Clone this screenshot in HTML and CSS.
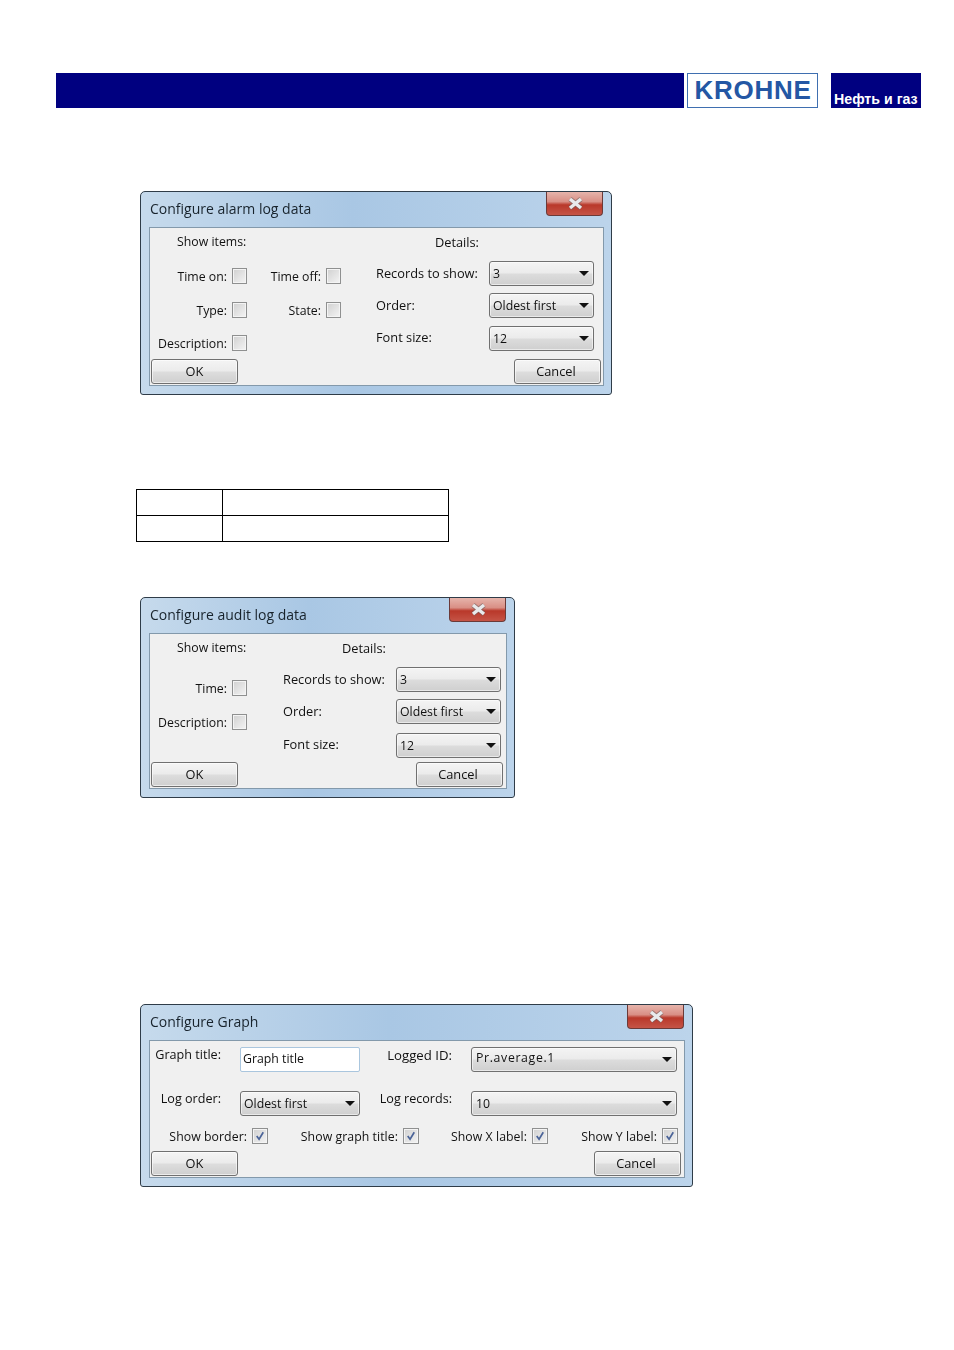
FILE: index.html
```html
<!DOCTYPE html>
<html lang="en">
<head>
<meta charset="utf-8">
<title>Configure dialogs</title>
<link rel="stylesheet" href="styles.css">
</head>
<body>
<header class="page-head">
  <div class="head-bar"></div>
  <div class="head-logo">KROHNE</div>
  <div class="head-tag">Нефть и газ</div>
</header>

<section class="dlg dlg-alarm">
  <div class="titlebar"><span class="title">Configure alarm log data</span><span class="close"><svg viewBox="0 0 57 24"><path class="x-edge" d="M24 7 L35 16 M35 7 L24 16"/><path class="x-mark" d="M24 7 L35 16 M35 7 L24 16"/></svg></span></div>
  <div class="panel">
    <div class="body">
      <div class="items">
        <div class="head head-items">Show items:</div>
        <div class="field"><span>Time on:</span><i class="chk"></i></div>
        <div class="field"><span>Time off:</span><i class="chk"></i></div>
        <div class="field"><span>Type:</span><i class="chk"></i></div>
        <div class="field"><span>State:</span><i class="chk"></i></div>
        <div class="field"><span>Description:</span><i class="chk"></i></div>
      </div>
      <div class="details">
        <div class="head head-details">Details:</div>
        <div class="lbl">Records to show:</div><div class="sel">3</div>
        <div class="lbl">Order:</div><div class="sel">Oldest first</div>
        <div class="lbl">Font size:</div><div class="sel">12</div>
      </div>
    </div>
    <div class="foot"><div class="btn">OK</div><div class="btn">Cancel</div></div>
  </div>
</section>

<table class="blank">
  <colgroup><col class="c1"><col class="c2"></colgroup>
  <tr><td></td><td></td></tr>
  <tr><td></td><td></td></tr>
</table>

<section class="dlg dlg-audit">
  <div class="titlebar"><span class="title">Configure audit log data</span><span class="close"><svg viewBox="0 0 57 24"><path class="x-edge" d="M24 7 L35 16 M35 7 L24 16"/><path class="x-mark" d="M24 7 L35 16 M35 7 L24 16"/></svg></span></div>
  <div class="panel">
    <div class="body">
      <div class="items">
        <div class="head head-items">Show items:</div>
        <div class="field"><span>Time:</span><i class="chk"></i></div>
        <div class="field"><span>Description:</span><i class="chk"></i></div>
      </div>
      <div class="details">
        <div class="head head-details">Details:</div>
        <div class="lbl">Records to show:</div><div class="sel">3</div>
        <div class="lbl">Order:</div><div class="sel">Oldest first</div>
        <div class="lbl">Font size:</div><div class="sel">12</div>
      </div>
    </div>
    <div class="foot"><div class="btn">OK</div><div class="btn">Cancel</div></div>
  </div>
</section>

<section class="dlg dlg-graph">
  <div class="titlebar"><span class="title">Configure Graph</span><span class="close"><svg viewBox="0 0 57 24"><path class="x-edge" d="M24 7 L35 16 M35 7 L24 16"/><path class="x-mark" d="M24 7 L35 16 M35 7 L24 16"/></svg></span></div>
  <div class="panel">
    <div class="body body-graph">
      <div class="form">
        <div class="flbl">Graph title:</div>
        <div class="input">Graph title</div>
        <div class="flbl">Logged ID:</div>
        <div class="sel sel-wide">Pr.average.1</div>
        <div class="flbl">Log order:</div>
        <div class="sel">Oldest first</div>
        <div class="flbl">Log records:</div>
        <div class="sel sel-num">10</div>
      </div>
      <div class="checks">
        <div class="field"><span>Show border:</span><i class="chk"><svg viewBox="0 0 15 15"><path d="M4 7.5 L6.5 11 L11 3.5"/></svg></i></div>
        <div class="field"><span>Show graph title:</span><i class="chk"><svg viewBox="0 0 15 15"><path d="M4 7.5 L6.5 11 L11 3.5"/></svg></i></div>
        <div class="field"><span>Show X label:</span><i class="chk"><svg viewBox="0 0 15 15"><path d="M4 7.5 L6.5 11 L11 3.5"/></svg></i></div>
        <div class="field"><span>Show Y label:</span><i class="chk"><svg viewBox="0 0 15 15"><path d="M4 7.5 L6.5 11 L11 3.5"/></svg></i></div>
      </div>
    </div>
    <div class="foot"><div class="btn">OK</div><div class="btn">Cancel</div></div>
  </div>
</section>
</body>
</html>
```
FILE: styles.css
```css
* { box-sizing: border-box; }
html, body { margin: 0; background: #fff; }
body { height: 1350px; overflow: hidden; font-family: "Open Sans", "Liberation Sans", sans-serif; }

.page-head { display: flex; margin: 73px 33px 0 56px; height: 35px; }
.head-bar { width: 628px; background: #000080; }
.head-logo {
  width: 131px; margin-left: 3px; border: 1px solid #3f6fb0; background: #fff;
  color: #2457a4; font: bold 26px/33px "Liberation Sans", sans-serif;
  text-align: center; letter-spacing: .7px; padding-left: 1px;
}
.head-tag {
  width: 90px; margin-left: 13px; background: #000080; color: #fff;
  font: bold 14.2px/17px "Liberation Sans", sans-serif;
  padding: 18px 0 0 3px; white-space: nowrap; overflow: hidden;
}

.dlg {
  position: relative; border: 1px solid #2f3c48; border-radius: 5px 5px 3px 3px;
  padding: 0 7px 8px 8px; color: #111; font-size: 12.3px; line-height: 16px;
  background: linear-gradient(90deg, #c6daec 0%, #a9c7e4 45%, #bcd4eb 100%);
  filter: blur(.4px);
}
.dlg-alarm { width: 472px; margin: 83px 0 0 140px; }
.dlg-audit { width: 375px; margin: 55px 0 0 140px; }
.dlg-graph { width: 553px; margin: 206px 0 0 140px; }

.titlebar { display: flex; justify-content: space-between; height: 35px; margin-right: 1px; }
.title { font-size: 14px; line-height: 34px; padding-left: 1px; color: #18232c; }
.close {
  width: 57px; height: 24px; border: 1px solid #6b3a38; border-top: 0; border-radius: 0 0 4px 4px;
  background: linear-gradient(#e6b4ab 0%, #d98f85 42%, #b9382a 56%, #c55446 100%);
}
.close svg { display: block; width: 57px; height: 24px; margin-left: -1px; }
.x-edge { fill: none; stroke: #6e5d5e; stroke-width: 5; opacity: .6; }
.x-mark { fill: none; stroke: #e8eaec; stroke-width: 3.4; }

.panel { border: 1px solid #8399ab; background: #f0f0f0; }
.body { display: flex; }
.dlg-alarm .body { height: 131px; }
.dlg-audit .body { height: 128px; }
.body-graph { display: block; height: 110px; }

.items { display: grid; align-content: start; }
.dlg-alarm .items { width: 191px; grid-template-columns: 97px 94px; grid-template-rows: 31px 34px 33px 34px; }
.dlg-audit .items { width: 97px; grid-template-columns: 97px; grid-template-rows: 37px 34px 33px; }
.head { line-height: 28px; align-self: start; }
.head-items { grid-column: 1 / -1; padding-left: 27px; white-space: nowrap; }

.field { display: flex; justify-content: flex-end; align-items: center; gap: 5px; white-space: nowrap; }
.field span { padding-top: 2px; }
.chk {
  display: block; flex: none; width: 15px; height: 16px; border: 1px solid #8f9090;
  background: linear-gradient(135deg, #d0d0d0, #f4f4f4);
  box-shadow: inset 0 0 0 1px #f4f4f4;
}
.checks .chk { width: 16px; }
.chk svg { display: block; width: 100%; height: 100%; }
.chk path { fill: none; stroke: #4a6398; stroke-width: 1.8; }

.details {
  display: grid; grid-template-columns: 113px 105px; grid-template-rows: 26px 25px 25px 26px;
  row-gap: 7px; align-items: center;
}
.dlg-alarm .details { margin-left: 35px; }
.dlg-audit .details { margin-left: 36px; grid-template-rows: 26px 25px 25px 27px; }
.details .sel { align-self: end; }
.head-details { grid-column: 1 / -1; width: 103px; text-align: right; font-size: 12.8px; }
.lbl { white-space: nowrap; font-size: 12.8px; padding-bottom: 2px; }

.sel {
  position: relative; height: 25px; border: 1px solid #707070; border-radius: 3px;
  padding-left: 3px; line-height: 23px; white-space: nowrap;
  background: linear-gradient(#f4f4f4 0%, #ebebeb 48%, #dcdcdc 52%, #cfcfcf 100%);
  box-shadow: inset 0 0 0 1px rgba(255,255,255,.55);
}
.sel-wide { letter-spacing: .65px; padding-left: 4px; line-height: 20px; }
.sel-num { padding-left: 4px; }
.sel::after {
  content: ""; position: absolute; right: 4px; top: 9px;
  border: 5px solid transparent; border-top-color: #111; border-bottom: 0;
}

.form { display: grid; grid-template-columns: 90px 147px 84px 206px; row-gap: 19px; padding-top: 6px; grid-auto-rows: 25px; }
.flbl { display: flex; justify-content: flex-end; align-self: start; line-height: 16px; white-space: nowrap; font-size: 12.6px; padding-right: 19px; }
.form .flbl:nth-child(3) { font-size: 13.2px; }
.form .input, .form .sel:nth-child(6) { width: 120px; }
.input {
  height: 25px; border: 1px solid #aac6de; border-radius: 2px; background: #fff;
  padding-left: 2px; line-height: 22px; white-space: nowrap;
}
.checks { display: grid; grid-template-columns: 118px 151px 129px 130px; margin-top: 11px; height: 16px; }
.checks span { letter-spacing: .05px; }

.foot { display: flex; justify-content: space-between; padding: 0 2px 1px 1px; }
.dlg-audit .foot, .dlg-graph .foot { padding-right: 3px; }
.btn {
  width: 87px; height: 25px; border: 1px solid #707070; border-radius: 3px; text-align: center; line-height: 22px; font-size: 12.8px;
  background: linear-gradient(#f4f4f4 0%, #ebebeb 48%, #dddddd 52%, #cfcfcf 100%);
  box-shadow: inset 0 0 0 1px rgba(255,255,255,.6);
}
.btn + .btn { padding-right: 3px; }

.blank { border-collapse: collapse; margin: 94px 0 0 136px; width: 313px; table-layout: fixed; }
.blank .c1 { width: 86px; }
.blank td { border: 1px solid #000; height: 26px; padding: 0; }
```
